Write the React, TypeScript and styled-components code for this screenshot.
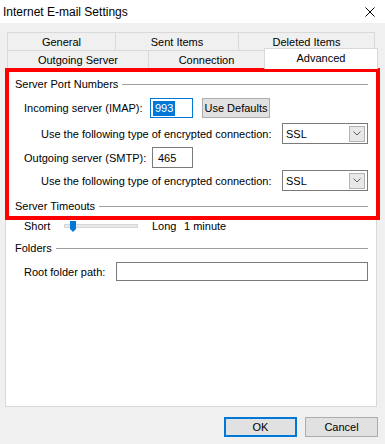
import styled, { createGlobalStyle } from "styled-components"

const Global = createGlobalStyle`
  body {
    margin: 0;
    background: #f0f0f0;
    font-family: "Liberation Sans", Arial, sans-serif;
    font-size: 11px;
    color: #000;
  }
`

const Dialog = styled.div`
  position: relative;
  width: 385px;
  height: 444px;
  background: #f0f0f0;
  overflow: hidden;
`

const TitleBar = styled.div`
  display: flex;
  justify-content: space-between;
  align-items: center;
  height: 23px;
  padding: 0 10px 0 3px;
  background: #fff;
  font-size: 12px;
`

const TabRow = styled.div<{ $top: number }>`
  display: flex;
  align-items: flex-end;
  height: 18px;
  margin-top: ${(p) => p.$top}px;
  padding-left: 7px;
`

const Tab = styled.div<{ $w: number; $active?: boolean }>`
  box-sizing: border-box;
  width: ${(p) => p.$w}px;
  height: ${(p) => (p.$active ? 21 : 18)}px;
  margin-bottom: ${(p) => (p.$active ? -1 : 0)}px;
  display: flex;
  align-items: center;
  justify-content: center;
  padding-bottom: ${(p) => (p.$active ? 3 : 0)}px;
  border: 1px solid #d9d9d9;
  border-bottom: none;
  background: ${(p) => (p.$active ? "#fff" : "#f0f0f0")};
  position: relative;
  z-index: ${(p) => (p.$active ? 1 : 0)};
  & + & {
    margin-left: -1px;
  }
`

const Panel = styled.div`
  box-sizing: border-box;
  width: 372px;
  height: 339px;
  margin-left: 5px;
  padding: 7px 8px 0 9px;
  border: 1px solid #d9d9d9;
  background: #fff;
  display: flex;
  flex-direction: column;
`

const GroupHeader = styled.div<{ $mt?: number }>`
  display: flex;
  align-items: center;
  gap: 4px;
  height: 16px;
  margin-top: ${(p) => p.$mt ?? 0}px;
  &::after {
    content: "";
    flex: 1;
    height: 1px;
    background: #a0a0a0;
  }
`

const Row = styled.div<{ $mt: number; $h: number; $indent: number }>`
  display: flex;
  align-items: center;
  height: ${(p) => p.$h}px;
  margin-top: ${(p) => p.$mt}px;
  padding-left: ${(p) => p.$indent}px;
`

const Label = styled.span<{ $w?: number }>`
  flex: none;
  width: ${(p) => (p.$w ? `${p.$w}px` : "auto")};
  white-space: nowrap;
`

const Input = styled.div<{ $w?: number; $focused?: boolean }>`
  box-sizing: border-box;
  flex: ${(p) => (p.$w ? "none" : 1)};
  width: ${(p) => (p.$w ? `${p.$w}px` : "auto")};
  height: 100%;
  display: flex;
  align-items: center;
  padding-left: ${(p) => (p.$focused ? 2 : 5)}px;
  border: 1px solid ${(p) => (p.$focused ? "#0078d7" : "#7a7a7a")};
  background: #fff;
`

const Selected = styled.span`
  display: inline-block;
  line-height: 15px;
  padding: 0 2px;
  background: #0078d7;
  color: #fff;
`

const Button = styled.div<{ $w: number; $default?: boolean }>`
  box-sizing: border-box;
  width: ${(p) => p.$w}px;
  height: 20px;
  display: flex;
  align-items: center;
  justify-content: center;
  background: #e1e1e1;
  border: ${(p) => (p.$default ? "2px solid #0078d7" : "1px solid #adadad")};
`

const Select = styled.div`
  box-sizing: border-box;
  flex: 1;
  height: 100%;
  display: flex;
  align-items: center;
  justify-content: space-between;
  padding: 0 2px 0 3px;
  border: 1px solid #7a7a7a;
  background: #fff;
`

const DropButton = styled.div`
  box-sizing: border-box;
  width: 16px;
  height: 16px;
  display: flex;
  align-items: center;
  justify-content: center;
  background: #e8e8e8;
  border: 1px solid #b4b4b4;
`

const Track = styled.div`
  position: relative;
  flex: none;
  box-sizing: border-box;
  width: 74px;
  height: 4px;
  margin-right: 14px;
  background: #e7eaea;
  border: 1px solid #d6d6d6;
`

const Thumb = styled.svg`
  position: absolute;
  left: 5px;
  top: -4px;
`

const Footer = styled.div`
  display: flex;
  justify-content: flex-end;
  gap: 8px;
  margin-top: 10px;
  padding-right: 7px;
`

const Highlight = styled.div`
  position: absolute;
  left: 5px;
  top: 68px;
  width: 375px;
  height: 152px;
  box-sizing: border-box;
  border: 4px solid #f00;
  pointer-events: none;
`

function Chevron() {
  return (
    <svg width="8" height="5" viewBox="0 0 8 5">
      <path d="M0.5 0.5 L4 4 L7.5 0.5" fill="none" stroke="#606060" strokeWidth="1" />
    </svg>
  )
}

function EncryptionRow({ mt }: { mt: number }) {
  return (
    <Row $mt={mt} $h={21} $indent={26}>
      <Label $w={241}>Use the following type of encrypted connection:</Label>
      <Select>
        SSL
        <DropButton>
          <Chevron />
        </DropButton>
      </Select>
    </Row>
  )
}

export default function App() {
  return (
    <>
      <Global />
      <Dialog>
        <TitleBar>
          <span>Internet E-mail Settings</span>
          <svg width="10" height="10" viewBox="0 0 10 10">
            <path d="M0.5 0.5 L9.5 9.5 M9.5 0.5 L0.5 9.5" stroke="#000" strokeWidth="1" />
          </svg>
        </TitleBar>

        <TabRow $top={9}>
          <Tab $w={109}>General</Tab>
          <Tab $w={124}>Sent Items</Tab>
          <Tab $w={137}>Deleted Items</Tab>
        </TabRow>
        <TabRow $top={0}>
          <Tab $w={142}>Outgoing Server</Tab>
          <Tab $w={117}>Connection</Tab>
          <Tab $w={114} $active>Advanced</Tab>
        </TabRow>

        <Panel>
          <GroupHeader>Server Port Numbers</GroupHeader>
          <Row $mt={6} $h={20} $indent={9}>
            <Label $w={126}>Incoming server (IMAP):</Label>
            <Input $w={43} $focused>
              <Selected>993</Selected>
            </Input>
            <Button $w={68} style={{ marginLeft: 9 }}>Use Defaults</Button>
          </Row>
          <EncryptionRow mt={5} />
          <Row $mt={3} $h={21} $indent={9}>
            <Label $w={128}>Outgoing server (SMTP):</Label>
            <Input $w={41}>465</Input>
          </Row>
          <EncryptionRow mt={2} />

          <GroupHeader $mt={7}>Server Timeouts</GroupHeader>
          <Row $mt={4} $h={16} $indent={9}>
            <Label $w={40}>Short</Label>
            <Track>
              <Thumb width="6" height="11" viewBox="0 0 6 11">
                <path d="M0 0 H6 V8 L3 11 L0 8 Z" fill="#0078d7" />
              </Thumb>
            </Track>
            <Label $w={32}>Long</Label>
            <Label>1 minute</Label>
          </Row>

          <GroupHeader $mt={6}>Folders</GroupHeader>
          <Row $mt={6} $h={19} $indent={9}>
            <Label $w={92}>Root folder path:</Label>
            <Input />
          </Row>
        </Panel>

        <Footer>
          <Button $w={73} $default>OK</Button>
          <Button $w={73}>Cancel</Button>
        </Footer>

        <Highlight />
      </Dialog>
    </>
  )
}
